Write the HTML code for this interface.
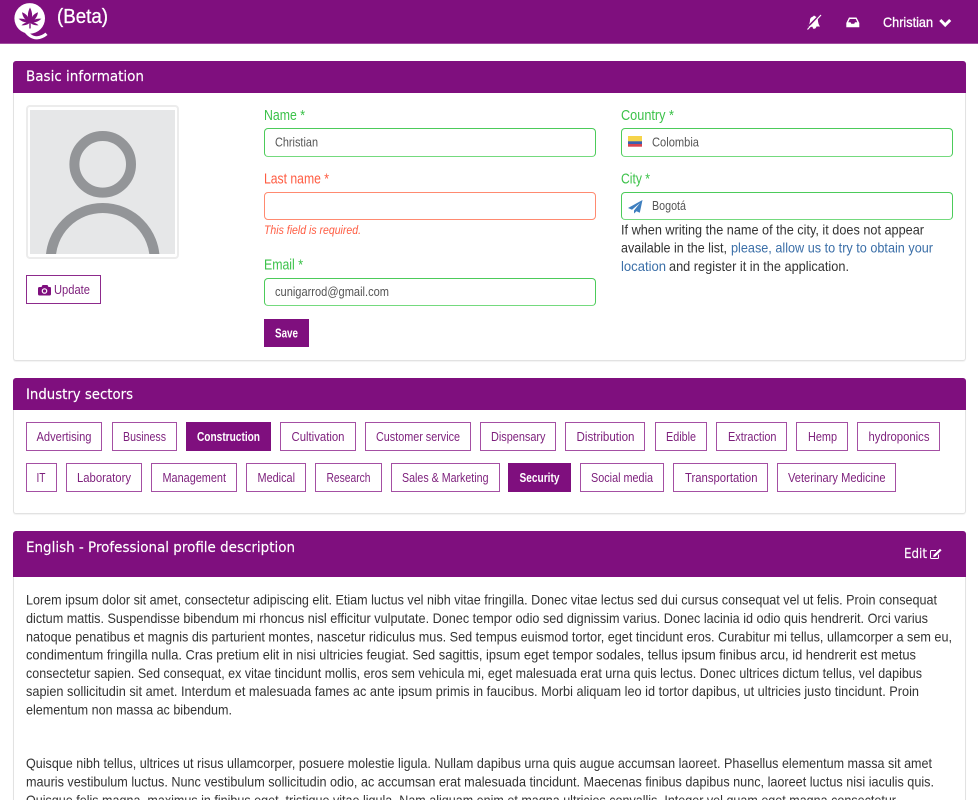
<!DOCTYPE html>
<html lang="en">
<head>
<meta charset="utf-8">
<title>Profile</title>
<style>
html,body{margin:0;padding:0;background:#fff;width:978px;height:800px;overflow:hidden;}
body{position:relative;font-family:"Liberation Sans",sans-serif;}
#p{position:absolute;left:0;top:0;width:978px;height:800px;overflow:hidden;}
.a{position:absolute;box-sizing:border-box;}
.panel{border:1px solid #e2e2e2;border-radius:3px;background:#fff;box-shadow:0 1px 1px rgba(0,0,0,.05);}
.head{background:#7f0f7e;border-radius:3px 3px 0 0;}
.in{border:1px solid #4ccb5a;border-bottom-color:#74da7e;border-radius:4px;background:#fff;}
.tag{border:1px solid #a44fa3;background:#fff;}
.tag.on{background:#7f0f7e;border-color:#7f0f7e;}
svg{position:absolute;left:0;top:0;}
svg text{font-family:"Liberation Sans",sans-serif;white-space:pre;}
.b{font-size:13.6px;fill:#333;}
.t{font-size:12.6px;fill:#7d1f7c;}
.l{font-size:14.4px;}
.g{fill:#3cc24a;}
.r{fill:#ff5c42;}
.i{font-size:13px;fill:#555;}
svg text.h{font-family:"DejaVu Sans",sans-serif;font-size:14.6px;fill:#fff;stroke:#fff;stroke-width:.15px;}
.w{font-size:13.6px;fill:#333;}
</style>
</head>
<body>
<div id="p">
<div class="a" style="left:0;top:0;width:978px;height:44px;background:#7f0f7e;border-bottom:1px solid #a14da0;"></div>

<div class="a panel" style="left:13px;top:61px;width:953px;height:300px;"></div>
<div class="a head" style="left:13px;top:61px;width:953px;height:32px;"></div>

<div class="a" style="left:26px;top:105px;width:153px;height:154px;border:2px solid #ececec;border-radius:4px;background:#fff;"></div>
<div class="a" style="left:30px;top:110px;width:145px;height:144px;background:#e6e7e8;overflow:hidden;">
<svg width="145" height="144" viewBox="30 110 145 144"><circle cx="102.7" cy="164.3" r="28.3" fill="none" stroke="#939598" stroke-width="10"/><circle cx="102.7" cy="260" r="52" fill="none" stroke="#939598" stroke-width="10"/></svg>
</div>
<div class="a" style="left:26px;top:275px;width:75px;height:29px;border:1px solid #8d2a8c;background:#fff;"></div>

<div class="a in" style="left:264px;top:128px;width:332px;height:29px;"></div>
<div class="a in" style="left:264px;top:192px;width:332px;height:28px;border-color:#ff8a70;"></div>
<div class="a in" style="left:264px;top:278px;width:332px;height:28px;"></div>
<div class="a in" style="left:621px;top:128px;width:332px;height:29px;"></div>
<div class="a in" style="left:621px;top:192px;width:332px;height:28px;"></div>
<div class="a" style="left:264px;top:319px;width:45px;height:28px;background:#7f0f7e;"></div>

<div class="a panel" style="left:13px;top:378px;width:953px;height:136px;"></div>
<div class="a head" style="left:13px;top:378px;width:953px;height:32px;"></div>
<div class="a tag" style="left:26px;top:422px;width:76px;height:29px;"></div>
<div class="a tag" style="left:112px;top:422px;width:65px;height:29px;"></div>
<div class="a tag on" style="left:186px;top:422px;width:85px;height:29px;"></div>
<div class="a tag" style="left:280px;top:422px;width:76px;height:29px;"></div>
<div class="a tag" style="left:365px;top:422px;width:106px;height:29px;"></div>
<div class="a tag" style="left:480px;top:422px;width:76px;height:29px;"></div>
<div class="a tag" style="left:565px;top:422px;width:80px;height:29px;"></div>
<div class="a tag" style="left:655px;top:422px;width:52px;height:29px;"></div>
<div class="a tag" style="left:716px;top:422px;width:71px;height:29px;"></div>
<div class="a tag" style="left:796px;top:422px;width:52px;height:29px;"></div>
<div class="a tag" style="left:857px;top:422px;width:83px;height:29px;"></div>
<div class="a tag" style="left:26px;top:463px;width:31px;height:29px;"></div>
<div class="a tag" style="left:66px;top:463px;width:76px;height:29px;"></div>
<div class="a tag" style="left:151px;top:463px;width:86px;height:29px;"></div>
<div class="a tag" style="left:246px;top:463px;width:60px;height:29px;"></div>
<div class="a tag" style="left:315px;top:463px;width:67px;height:29px;"></div>
<div class="a tag" style="left:391px;top:463px;width:109px;height:29px;"></div>
<div class="a tag on" style="left:508px;top:463px;width:63px;height:29px;"></div>
<div class="a tag" style="left:580px;top:463px;width:84px;height:29px;"></div>
<div class="a tag" style="left:673px;top:463px;width:95px;height:29px;"></div>
<div class="a tag" style="left:777px;top:463px;width:119px;height:29px;"></div>

<div class="a panel" style="left:13px;top:531px;width:953px;height:290px;"></div>
<div class="a head" style="left:13px;top:531px;width:953px;height:46px;"></div>

<svg width="978" height="800" viewBox="0 0 978 800">
<!-- logo -->
<circle cx="29.7" cy="18.4" r="15.3" fill="#fff"/>
<path d="M24 29Q30 38 37 37.8Q42 37.500 46.500 33.800" fill="none" stroke="#fff" stroke-width="3.2"/>
<g fill="#7f0f7e" transform="translate(30 22.5)">
<path d="M0 0Q-4.200 -7 0 -15Q4.200 -7 0 0Z"/>
<path d="M0 0Q-3.800 -6.500 0 -13Q3.800 -6.500 0 0Z" transform="rotate(-38)"/>
<path d="M0 0Q-3.800 -6.500 0 -13Q3.800 -6.500 0 0Z" transform="rotate(38)"/>
<path d="M0 0Q-3 -5.500 0 -12Q3 -5.500 0 0Z" transform="rotate(-72)"/>
<path d="M0 0Q-3 -5.500 0 -12Q3 -5.500 0 0Z" transform="rotate(72)"/>
<path d="M0 0Q-2.200 -4 0 -9Q2.200 -4 0 0Z" transform="rotate(-108)"/>
<path d="M0 0Q-2.200 -4 0 -9Q2.200 -4 0 0Z" transform="rotate(108)"/>
<rect x="-.7" y="0" width="1.400" height="6"/>
</g>
<text x="57" y="23" font-size="20" fill="#fff" stroke="#fff" stroke-width=".3" textLength="51" lengthAdjust="spacingAndGlyphs">(Beta)</text>

<!-- bell slash -->
<path d="M807 26.500Q810 24.500 810 20Q810 17.500 813 16.500L814 15.500L815.500 16.500L816.500 17Z" fill="#fff"/>
<path d="M808.500 27L817.800 19Q818 24 820 26.500L816.500 26.500Q815.500 29.500 813 28.500L812.500 26.800Z" fill="#fff"/>
<path d="M807.500 29.500L821 15" stroke="#fff" stroke-width="1.200"/>
<!-- inbox -->
<path d="M849 17.500H856.500L859.300 23V27.300H846.300V23Z" fill="#fff"/>
<path d="M849.800 19H855.800L857.300 22.300H855L854.200 23.800H851.300L850.500 22.300H848.200Z" fill="#7f0f7e"/>
<text x="883" y="27" font-size="14" fill="#fff" stroke="#fff" stroke-width=".3" textLength="50" lengthAdjust="spacingAndGlyphs">Christian</text>
<path d="M940.300 20L945.200 25L950.200 20" fill="none" stroke="#fff" stroke-width="3"/>

<text class="h" x="26" y="81" textLength="118" lengthAdjust="spacingAndGlyphs">Basic information</text>
<text class="h" x="26" y="399" textLength="107" lengthAdjust="spacingAndGlyphs">Industry sectors</text>
<text class="h" x="26" y="552" textLength="269" lengthAdjust="spacingAndGlyphs">English - Professional profile description</text>
<text class="h" x="904" y="558" style="font-size:13px" textLength="23" lengthAdjust="spacingAndGlyphs">Edit</text>
<path d="M938.500 554.500V557.500Q938.500 558.500 937.500 558.500H931.500Q930.500 558.500 930.500 557.500V551.500Q930.500 550.500 931.500 550.500H936" fill="none" stroke="#fff" stroke-width="1"/>
<path d="M933.500 555L940 548.700L941.600 550.300L935.200 556.600L933.300 557Z" fill="#fff"/>

<!-- camera + update -->
<path d="M38 288.500Q38 287 39.500 287H41.500L42.500 285H47.500L48.500 287H50Q51 287 51 288.500V294Q51 295.500 49.500 295.500H39.500Q38 295.500 38 294Z" fill="#7f0f7e"/>
<circle cx="44.500" cy="291" r="2.800" fill="#fff"/><circle cx="44.500" cy="291" r="1.600" fill="#7f0f7e"/>
<text class="t" x="54" y="294" textLength="36" lengthAdjust="spacingAndGlyphs">Update</text>

<!-- labels -->
<text class="l g" x="264" y="120" textLength="41" lengthAdjust="spacingAndGlyphs">Name *</text>
<text class="l r" x="264" y="183.500" textLength="65" lengthAdjust="spacingAndGlyphs">Last name *</text>
<text class="l g" x="264" y="269.500" textLength="39" lengthAdjust="spacingAndGlyphs">Email *</text>
<text class="l g" x="621" y="120" textLength="53" lengthAdjust="spacingAndGlyphs">Country *</text>
<text class="l g" x="621" y="183.500" textLength="29" lengthAdjust="spacingAndGlyphs">City *</text>
<text class="r" x="264" y="234" font-size="12" font-style="italic" textLength="97" lengthAdjust="spacingAndGlyphs">This field is required.</text>
<text class="i" x="275" y="146.500" textLength="43" lengthAdjust="spacingAndGlyphs">Christian</text>
<text class="i" x="275" y="296" textLength="114" lengthAdjust="spacingAndGlyphs">cunigarrod@gmail.com</text>
<text class="i" x="652" y="146.500" textLength="47" lengthAdjust="spacingAndGlyphs">Colombia</text>
<text class="i" x="652" y="210" textLength="34" lengthAdjust="spacingAndGlyphs">Bogotá</text>
<text x="275" y="337.500" font-size="12.500" font-weight="bold" fill="#fff" textLength="23" lengthAdjust="spacingAndGlyphs">Save</text>

<!-- flag / plane -->
<rect x="628" y="136" width="14" height="5.500" fill="#f6d44a"/>
<rect x="628" y="141.300" width="14" height="2.800" fill="#3a5fb0"/>
<rect x="628" y="144" width="14" height="2.700" fill="#d8434e"/>
<path d="M642.500 200L628 208L632 209.800L640 203L634 210.500V213.500L636.500 211.300L639.800 212.800Z" fill="#3f7fbf"/>

<text class="w" x="621" y="234.500" textLength="303" lengthAdjust="spacingAndGlyphs">If when writing the name of the city, it does not appear</text>
<text class="w" x="621" y="252.500" textLength="106" lengthAdjust="spacingAndGlyphs">available in the list,</text>
<text class="w" x="731" y="252.500" textLength="202" lengthAdjust="spacingAndGlyphs" style="fill:#3b6fa8">please, allow us to try to obtain your</text>
<text class="w" x="621" y="271" textLength="45" lengthAdjust="spacingAndGlyphs" style="fill:#3b6fa8">location</text>
<text class="w" x="669" y="271" textLength="180" lengthAdjust="spacingAndGlyphs">and register it in the application.</text>

<!-- tags -->
<text class="t" x="36.500" y="441" textLength="55" lengthAdjust="spacingAndGlyphs">Advertising</text>
<text class="t" x="123" y="441" textLength="43" lengthAdjust="spacingAndGlyphs">Business</text>
<text class="t" x="197" y="441" font-weight="bold" style="fill:#fff" textLength="63" lengthAdjust="spacingAndGlyphs">Construction</text>
<text class="t" x="291.500" y="441" textLength="53" lengthAdjust="spacingAndGlyphs">Cultivation</text>
<text class="t" x="376" y="441" textLength="84" lengthAdjust="spacingAndGlyphs">Customer service</text>
<text class="t" x="491" y="441" textLength="54.500" lengthAdjust="spacingAndGlyphs">Dispensary</text>
<text class="t" x="576.500" y="441" textLength="58" lengthAdjust="spacingAndGlyphs">Distribution</text>
<text class="t" x="666" y="441" textLength="30" lengthAdjust="spacingAndGlyphs">Edible</text>
<text class="t" x="728" y="441" textLength="48.500" lengthAdjust="spacingAndGlyphs">Extraction</text>
<text class="t" x="808" y="441" textLength="29" lengthAdjust="spacingAndGlyphs">Hemp</text>
<text class="t" x="868.500" y="441" textLength="61" lengthAdjust="spacingAndGlyphs">hydroponics</text>
<text class="t" x="36.500" y="482" textLength="9" lengthAdjust="spacingAndGlyphs">IT</text>
<text class="t" x="77" y="482" textLength="54" lengthAdjust="spacingAndGlyphs">Laboratory</text>
<text class="t" x="162.500" y="482" textLength="63.500" lengthAdjust="spacingAndGlyphs">Management</text>
<text class="t" x="257.500" y="482" textLength="37.500" lengthAdjust="spacingAndGlyphs">Medical</text>
<text class="t" x="326.500" y="482" textLength="44" lengthAdjust="spacingAndGlyphs">Research</text>
<text class="t" x="402" y="482" textLength="86.500" lengthAdjust="spacingAndGlyphs">Sales &amp; Marketing</text>
<text class="t" x="519.500" y="482" font-weight="bold" style="fill:#fff" textLength="40" lengthAdjust="spacingAndGlyphs">Security</text>
<text class="t" x="591" y="482" textLength="62" lengthAdjust="spacingAndGlyphs">Social media</text>
<text class="t" x="685" y="482" textLength="72.500" lengthAdjust="spacingAndGlyphs">Transportation</text>
<text class="t" x="788" y="482" textLength="97.500" lengthAdjust="spacingAndGlyphs">Veterinary Medicine</text>

<!-- body -->
<text class="b" x="26" y="604.500" textLength="911" lengthAdjust="spacingAndGlyphs">Lorem ipsum dolor sit amet, consectetur adipiscing elit. Etiam luctus vel nibh vitae fringilla. Donec vitae lectus sed dui cursus consequat vel ut felis. Proin consequat</text>
<text class="b" x="26" y="623" textLength="902" lengthAdjust="spacingAndGlyphs">dictum mattis. Suspendisse bibendum mi rhoncus nisl efficitur vulputate. Donec tempor odio sed dignissim varius. Donec lacinia id odio quis hendrerit. Orci varius</text>
<text class="b" x="26" y="641.500" textLength="926" lengthAdjust="spacingAndGlyphs">natoque penatibus et magnis dis parturient montes, nascetur ridiculus mus. Sed tempus euismod tortor, eget tincidunt eros. Curabitur mi tellus, ullamcorper a sem eu,</text>
<text class="b" x="26" y="659.500" textLength="890" lengthAdjust="spacingAndGlyphs">condimentum fringilla nulla. Cras pretium elit in nisi ultricies feugiat. Sed sagittis, ipsum eget tempor sodales, tellus ipsum finibus arcu, id hendrerit est metus</text>
<text class="b" x="26" y="678" textLength="896" lengthAdjust="spacingAndGlyphs">consectetur sapien. Sed consequat, ex vitae tincidunt mollis, eros sem vehicula mi, eget malesuada erat urna quis lectus. Donec ultrices dictum tellus, vel dapibus</text>
<text class="b" x="26" y="696" textLength="893" lengthAdjust="spacingAndGlyphs">sapien sollicitudin sit amet. Interdum et malesuada fames ac ante ipsum primis in faucibus. Morbi aliquam leo id tortor dapibus, ut ultricies justo tincidunt. Proin</text>
<text class="b" x="26" y="714.500" textLength="206" lengthAdjust="spacingAndGlyphs">elementum non massa ac bibendum.</text>
<text class="b" x="26" y="768" textLength="906" lengthAdjust="spacingAndGlyphs">Quisque nibh tellus, ultrices ut risus ullamcorper, posuere molestie ligula. Nullam dapibus urna quis augue accumsan laoreet. Phasellus elementum massa sit amet</text>
<text class="b" x="26" y="786.500" textLength="908" lengthAdjust="spacingAndGlyphs">mauris vestibulum luctus. Nunc vestibulum sollicitudin odio, ac accumsan erat malesuada tincidunt. Maecenas finibus dapibus nunc, laoreet luctus nisi iaculis quis.</text>
<text class="b" x="26" y="805" textLength="870" lengthAdjust="spacingAndGlyphs">Quisque felis magna, maximus in finibus eget, tristique vitae ligula. Nam aliquam enim et magna ultricies convallis. Integer vel quam eget magna consectetur</text>
</svg>
</div>
</body>
</html>
